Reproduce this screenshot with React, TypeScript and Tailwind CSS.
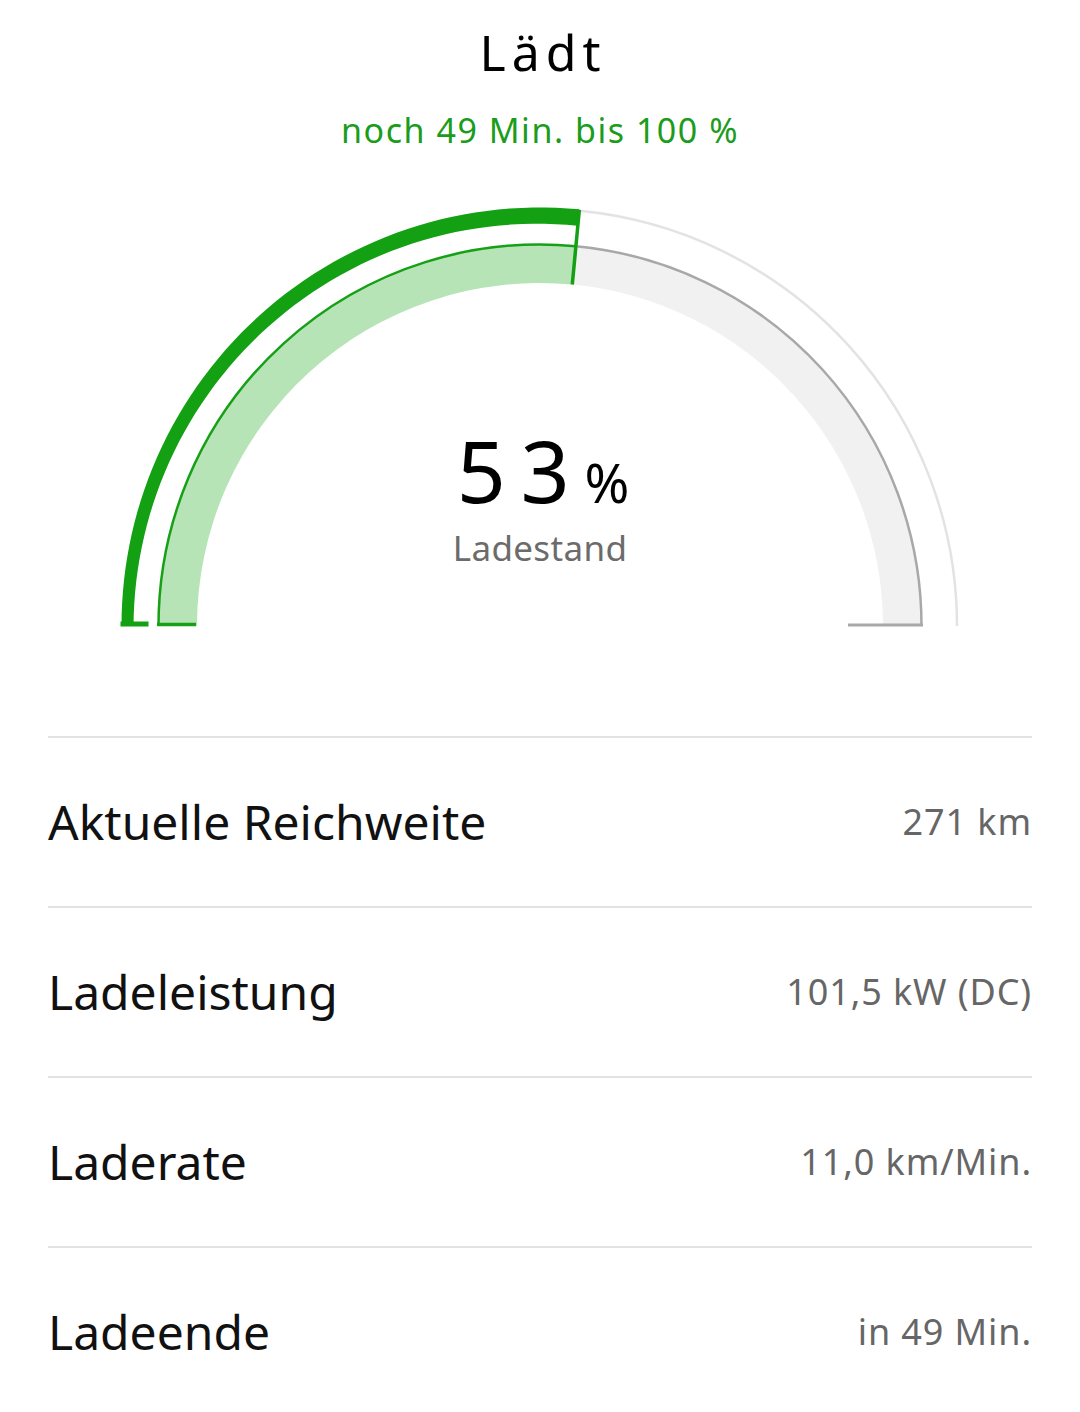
import React from "react";

const font = { fontFamily: '"Noto Sans", "Liberation Sans", sans-serif' };

const CX = 540;
const CY = 426;

function pt(r: number, deg: number) {
  const a = (deg * Math.PI) / 180;
  return [CX + r * Math.cos(a), CY - r * Math.sin(a)];
}

function arc(r: number, from: number, to: number) {
  const [x1, y1] = pt(r, from);
  const [x2, y2] = pt(r, to);
  return `M ${x1} ${y1} A ${r} ${r} 0 0 1 ${x2} ${y2}`;
}

function band(rIn: number, rOut: number, from: number, to: number) {
  const [a1, b1] = pt(rOut, from);
  const [a2, b2] = pt(rOut, to);
  const [c1, d1] = pt(rIn, to);
  const [c2, d2] = pt(rIn, from);
  return `M ${a1} ${b1} A ${rOut} ${rOut} 0 0 1 ${a2} ${b2} L ${c1} ${d1} A ${rIn} ${rIn} 0 0 0 ${c2} ${d2} Z`;
}

// thick outer bar gets a bit wider toward its end
function taper(rOut: number, inStart: number, inEnd: number, from: number, to: number) {
  const pts: string[] = [];
  const n = 60;
  for (let i = 0; i <= n; i++) {
    const d = from + ((to - from) * i) / n;
    const [x, y] = pt(rOut, d);
    pts.push(`${x},${y}`);
  }
  for (let i = n; i >= 0; i--) {
    const d = from + ((to - from) * i) / n;
    const r = inStart + ((inEnd - inStart) * i) / n;
    const [x, y] = pt(r, d);
    pts.push(`${x},${y}`);
  }
  return pts.join(" ");
}

function Gauge({ percent }: { percent: number }) {
  const end = 180 - (percent / 100) * 180;
  const [ex1, ey1] = pt(418, end);
  const [ex2, ey2] = pt(343, end);
  return (
    <svg width="1080" height="440" viewBox="0 0 1080 440" className="block">
      {/* outer thin track */}
      <path d={arc(417, end, 0)} fill="none" stroke="#e3e3e3" strokeWidth="2.5" />
      {/* inner band */}
      <path d={band(343, 381, end, 0)} fill="#f1f1f1" />
      <path d={band(343, 381, 180, end)} fill="#b7e4b7" />
      <path d={arc(381.5, end, 0)} fill="none" stroke="#a8a8a8" strokeWidth="2.5" />
      <line x1="848" y1="425" x2="923" y2="425" stroke="#a8a8a8" strokeWidth="3" />
      <path d={arc(381.5, 180, end)} fill="none" stroke="#16a016" strokeWidth="2.5" />
      <line x1="157" y1="424.5" x2="196" y2="424.5" stroke="#16a016" strokeWidth="3.5" />
      {/* thick outer bar */}
      <polygon points={taper(418.5, 406.5, 402, 180, end)} fill="#13a013" />
      <rect x="120.5" y="421.5" width="28" height="5" fill="#13a013" />
      <line x1={ex1} y1={ey1} x2={ex2} y2={ey2} stroke="#13a013" strokeWidth="3.5" />
    </svg>
  );
}

const rows = [
  { label: "Aktuelle Reichweite", value: "271 km" },
  { label: "Ladeleistung", value: "101,5 kW (DC)" },
  { label: "Laderate", value: "11,0 km/Min." },
  { label: "Ladeende", value: "in 49 Min." },
];

export default function App() {
  return (
    <div className="w-[1080px] min-h-[1412px] bg-white overflow-hidden" style={font}>
      <div className="flex flex-col items-center pt-[22px]">
        <h1 className="text-[50px] leading-[60px] text-black tracking-[0.12em] pl-[0.12em]">Lädt</h1>
        <p className="mt-[28px] text-[34px] leading-[40px] text-[#1b9c1b] tracking-[0.045em]">noch 49 Min. bis 100 %</p>
      </div>

      <div className="relative mt-[50px]">
        <Gauge percent={53} />
        <div className="absolute left-0 right-0 top-[220px] flex flex-col items-center">
          <div className="flex items-baseline pl-[6px]">
            <span className="text-[86px] leading-[100px] text-black tracking-[0.17em]">53</span>
            <span className="text-[54px] leading-[60px] text-black">%</span>
          </div>
          <span className="mt-[6px] text-[35px] leading-[44px] text-[#6b6b6b] tracking-[0.01em]">Ladestand</span>
        </div>
      </div>

      <div className="mt-[96px] mx-12">
        {rows.map((r) => (
          <div key={r.label} className="h-[170px] border-t-2 border-[#e2e2e2] flex items-center justify-between">
            <span className="text-[48px] leading-[56px] text-[#111]">{r.label}</span>
            <span className="text-[36px] leading-[44px] text-[#666] tracking-[0.025em]">{r.value}</span>
          </div>
        ))}
      </div>
    </div>
  );
}
